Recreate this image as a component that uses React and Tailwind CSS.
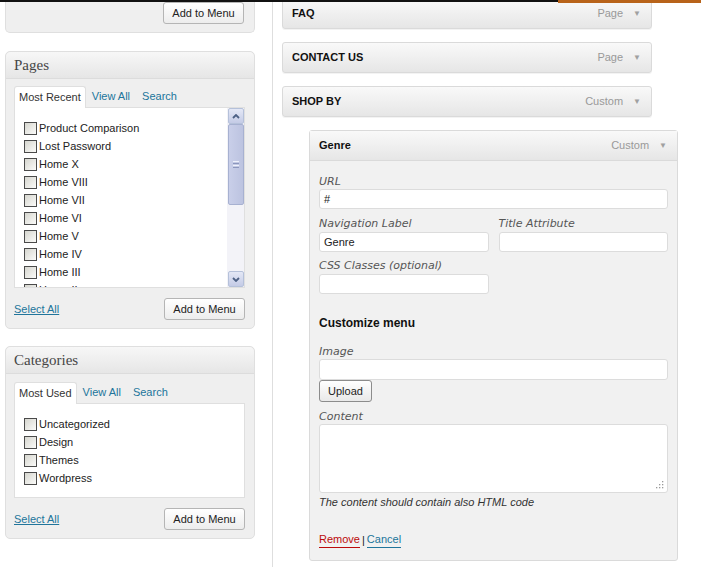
import { useState } from 'react'

const SANS = "font-['Liberation_Sans',Arial,sans-serif]"
const LABEL = "block text-[11px] leading-[14px] italic text-[#555] font-['DejaVu_Sans',Verdana,sans-serif]"

function Checkbox() {
  return (
    <span className="inline-block h-[13px] w-[13px] shrink-0 border border-[#4a4a4a] bg-gradient-to-br from-[#d6d6cf] to-[#fbfbf9]" />
  )
}

function AddButton() {
  return (
    <button className="h-[22px] w-[81px] rounded-[3px] border border-[#b5b5b5] bg-gradient-to-b from-white to-[#ededed] text-[11px] text-[#222]">
      Add to Menu
    </button>
  )
}

function Tabs({ active, others }) {
  return (
    <div className="flex h-[21px] items-end text-[11px]">
      <span className="relative -mb-px flex h-[22px] items-center rounded-t-[3px] border border-b-0 border-[#dfdfdf] bg-white px-[4px] text-[#333]">
        {active}
      </span>
      {others.map((t) => (
        <span key={t} className="flex h-[21px] items-center px-[6px] text-[#21759b]">
          {t}
        </span>
      ))}
    </div>
  )
}

function ScrollArrow({ up }) {
  return (
    <div className="flex h-[16px] w-[16px] items-center justify-center rounded-[2px] border border-[#b5c1da] bg-gradient-to-b from-[#e4e8f6] to-[#c4cbe6]">
      <svg width="8" height="5" viewBox="0 0 8 5">
        <path
          d={up ? 'M1 4 L4 1 L7 4' : 'M1 1 L4 4 L7 1'}
          fill="none"
          stroke="#4d6185"
          strokeWidth="1.8"
        />
      </svg>
    </div>
  )
}

function Scrollbar() {
  return (
    <div className="flex w-[17px] shrink-0 flex-col bg-[#f3f3f8] pl-px">
      <ScrollArrow up />
      <div className="flex h-[81px] w-[16px] items-center justify-center rounded-[2px] border border-[#a7b1d1] bg-gradient-to-r from-[#c9cfe9] to-[#bcc3e0]">
        <div className="flex flex-col gap-[1px]">
          <span className="block h-px w-[6px] bg-[#eef0fa]" />
          <span className="block h-px w-[6px] bg-[#8c97bd]" />
          <span className="block h-px w-[6px] bg-[#eef0fa]" />
          <span className="block h-px w-[6px] bg-[#8c97bd]" />
        </div>
      </div>
      <div className="flex-1" />
      <ScrollArrow />
    </div>
  )
}

function CheckList({ items }) {
  return (
    <div className="flex-1 overflow-hidden pl-[9px] pt-[11px]">
      {items.map((i) => (
        <div key={i} className="flex h-[18px] items-center gap-[2px] text-[11px] text-[#222]">
          <Checkbox />
          <span>{i}</span>
        </div>
      ))}
    </div>
  )
}

function Panel({ title, tabs, items, boxH, scroll, top = 'pt-[7px]' }) {
  return (
    <div className="ml-[5px] w-[250px] rounded-[5px] border border-[#dfdfdf] bg-[#efefef]">
      <div className="flex h-[27px] items-center rounded-t-[5px] border-b border-[#dcdcdc] bg-gradient-to-b from-[#f7f7f7] to-[#e6e6e6] pl-[8px] font-['Liberation_Serif',Georgia,serif] text-[15px] text-[#464646]">
        {title}
      </div>
      <div className={`pb-[8px] pl-[8px] pr-[9px] ${top}`}>
        <Tabs active={tabs[0]} others={tabs.slice(1)} />
        <div className="flex border border-[#dfdfdf] bg-white" style={{ height: boxH }}>
          <CheckList items={items} />
          {scroll && <Scrollbar />}
        </div>
        <div className="mt-[10px] flex items-center justify-between">
          <a className="text-[11px] text-[#21759b] underline">Select All</a>
          <AddButton />
        </div>
      </div>
    </div>
  )
}

function Arrow() {
  return <span className="ml-[10px] text-[8px] text-[#a0a0a0]">▼</span>
}

function ItemBar({ title, type, className = '' }) {
  return (
    <div
      className={`ml-[9px] flex h-[31px] w-[370px] items-center justify-between rounded-[3px] border border-[#dadada] bg-gradient-to-b from-[#f9f9f9] to-[#e6e6e6] pl-[9px] pr-[10px] shadow-[0_1px_0_#f3f3f3] ${className}`}
    >
      <span className="text-[11px] font-bold text-[#111]">{title}</span>
      <span className="flex items-center text-[11px] text-[#999]">
        {type}
        <Arrow />
      </span>
    </div>
  )
}

function Field({ w = 'w-full', h = 'h-[20px]', value = '' }) {
  return (
    <div
      className={`${w} ${h} rounded-[3px] border border-[#dcdcdc] bg-white px-[4px] text-[11px] leading-[18px] text-[#222]`}
    >
      {value}
    </div>
  )
}

export default function App() {
  const [pages] = useState([
    'Product Comparison',
    'Lost Password',
    'Home X',
    'Home VIII',
    'Home VII',
    'Home VI',
    'Home V',
    'Home IV',
    'Home III',
    'Home II',
  ])

  return (
    <div className={`relative flex h-[567px] w-[701px] overflow-hidden bg-white ${SANS}`}>
      <div className="absolute left-0 top-0 h-[2px] w-[558px] bg-[#111]" />
      <div className="absolute left-[558px] top-0 h-[3px] w-[143px] bg-[#b8631a]" />

      {/* left column */}
      <div className="flex w-[273px] shrink-0 flex-col border-r border-[#dedede]">
        <div className="ml-[5px] flex h-[33px] w-[250px] items-start justify-end rounded-b-[5px] border border-t-0 border-[#dfdfdf] bg-[#efefef] pr-[10px] pt-[2px]">
          <AddButton />
        </div>
        <div className="mt-[18px]">
          <Panel title="Pages" tabs={['Most Recent', 'View All', 'Search']} items={pages} boxH={181} scroll />
        </div>
        <div className="mt-[17px]">
          <Panel
            title="Categories"
            tabs={['Most Used', 'View All', 'Search']}
            items={['Uncategorized', 'Design', 'Themes', 'Wordpress']}
            boxH={95}
            top="pt-[8px]"
          />
        </div>
      </div>

      {/* right column */}
      <div className="flex flex-1 flex-col">
        <ItemBar title="FAQ" type="Page" className="-mt-[2px]" />
        <ItemBar title="CONTACT US" type="Page" className="mt-[13px]" />
        <ItemBar title="SHOP BY" type="Custom" className="mt-[13px]" />

        <div className="ml-[36px] mt-[13px] w-[369px] rounded-[3px] border border-[#dadada] bg-[#f1f1f1]">
          <div className="flex h-[30px] items-center justify-between border-b border-[#dadada] bg-gradient-to-b from-[#f9f9f9] to-[#e6e6e6] pl-[9px] pr-[10px]">
            <span className="text-[11px] font-bold text-[#111]">Genre</span>
            <span className="flex items-center text-[11px] text-[#999]">
              Custom
              <Arrow />
            </span>
          </div>
          <div className="px-[9px] pb-[12px] pt-[14px]">
            <label className={LABEL}>URL</label>
            <Field value="#" />

            <div className="mt-[8px] grid grid-cols-2 gap-x-[10px]">
              <div>
                <label className={LABEL}>Navigation Label</label>
                <div className="mt-[1px]">
                  <Field value="Genre" />
                </div>
              </div>
              <div>
                <label className={LABEL}>Title Attribute</label>
                <div className="mt-[1px]">
                  <Field />
                </div>
              </div>
            </div>

            <label className={`${LABEL} mt-[7px]`}>CSS Classes (optional)</label>
            <div className="mt-[1px]">
              <Field w="w-[170px]" />
            </div>

            <h3 className="mt-[22px] text-[12px] font-bold leading-[15px] text-[#111]">Customize menu</h3>

            <label className={`${LABEL} mt-[14px]`}>Image</label>
            <Field h="h-[21px]" />
            <button className="block h-[22px] w-[53px] rounded-[3px] border border-[#8c8c8c] bg-gradient-to-b from-white to-[#e9e9e9] text-[11px] text-[#222]">
              Upload
            </button>

            <label className={`${LABEL} mt-[8px]`}>Content</label>
            <div className="relative h-[69px] rounded-[3px] border border-[#dcdcdc] bg-white">
              <svg className="absolute bottom-[3px] right-[3px]" width="9" height="9" viewBox="0 0 9 9">
                <g fill="#9a9a9a">
                  <rect x="7" y="1" width="1.3" height="1.3" />
                  <rect x="4" y="4" width="1.3" height="1.3" />
                  <rect x="7" y="4" width="1.3" height="1.3" />
                  <rect x="1" y="7" width="1.3" height="1.3" />
                  <rect x="4" y="7" width="1.3" height="1.3" />
                  <rect x="7" y="7" width="1.3" height="1.3" />
                </g>
              </svg>
            </div>
            <p className="mt-[2px] text-[11px] italic leading-[14px] text-[#333]">
              The content should contain also HTML code
            </p>

            <div className="mt-[23px] flex items-center text-[11px] leading-[15px]">
              <a className="border-b border-[#bc0b0b] text-[#bc0b0b]">Remove</a>
              <span className="px-[2px] text-[#222]">|</span>
              <a className="border-b border-[#21759b] text-[#21759b]">Cancel</a>
            </div>
          </div>
        </div>
      </div>
    </div>
  )
}
